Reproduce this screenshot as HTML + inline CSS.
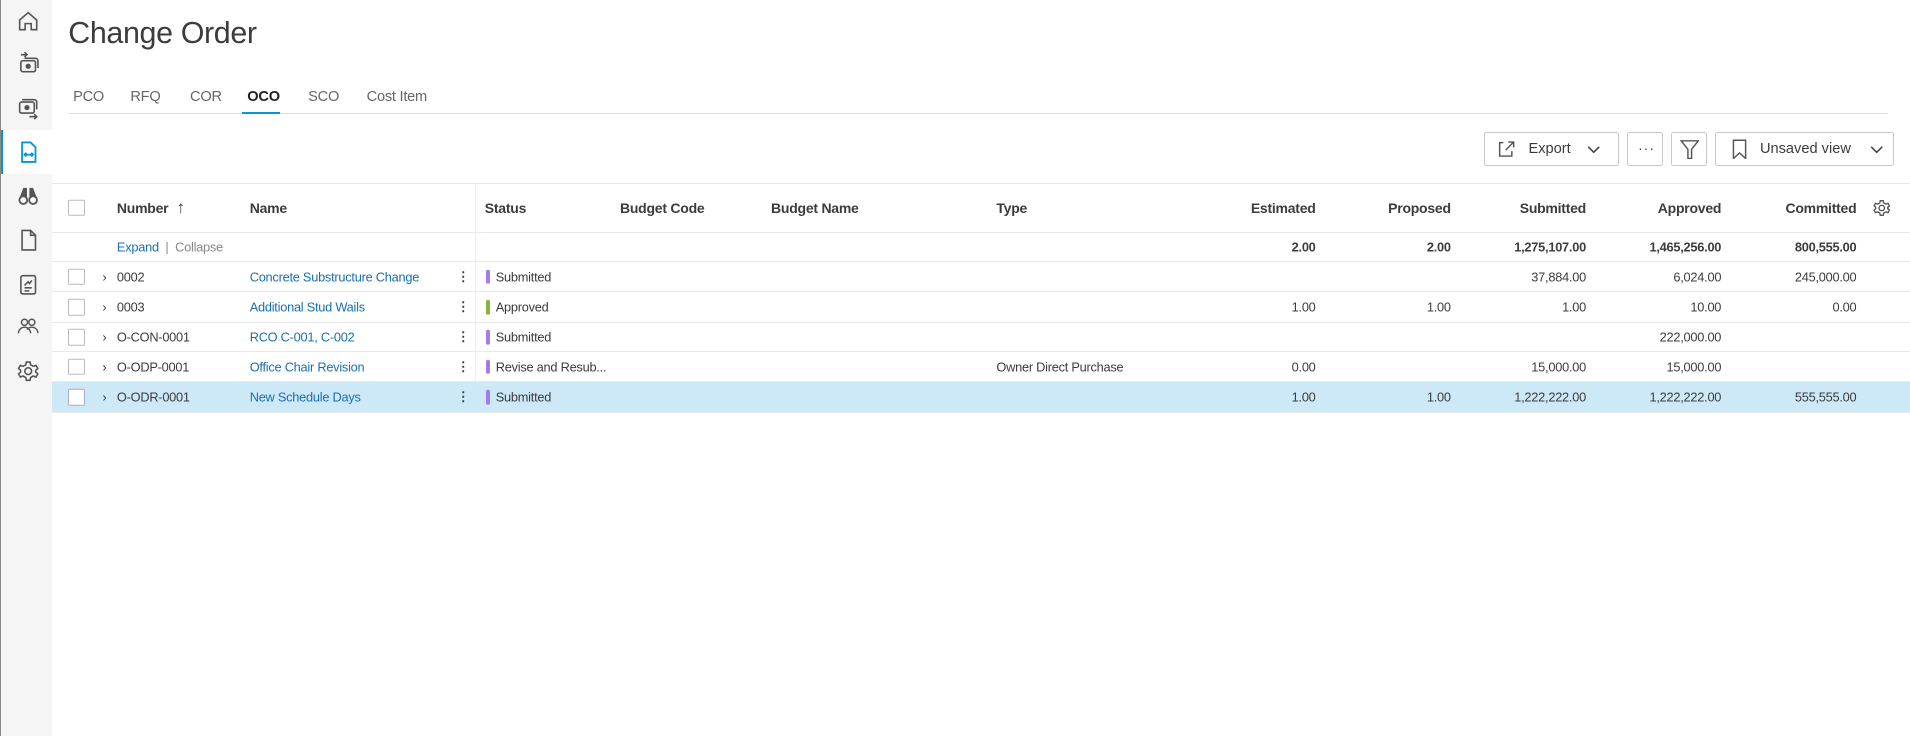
<!DOCTYPE html>
<html><head><meta charset="utf-8"><style>
html,body{margin:0;padding:0;background:#fff;overflow:hidden}
body{width:1568px;height:604px;zoom:1.21811;position:relative;font-family:"Liberation Sans",sans-serif;color:#3c3c3c}
.a{position:absolute;white-space:nowrap}
#side{left:0;top:0;width:43px;height:604px;background:#f5f5f5;border-left:1px solid #888;box-sizing:border-box}
.ic{position:absolute;left:12px;width:20px;height:20px}
.tab{position:absolute;top:73px;font-size:12px;color:#666;letter-spacing:-0.2px}
.btn{position:absolute;top:108px;height:28px;border:1px solid #c8c8c8;border-radius:2px;box-sizing:border-box;background:#fff}
.row{position:absolute;left:43px;width:1525px;border-bottom:1px solid #eaeaea;box-sizing:border-box;font-size:10.5px;color:#3c3c3c;letter-spacing:-0.2px}
.row .a{top:50%;transform:translateY(-50%)}
.cb{width:12px;height:12px;border:1px solid #bbb;background:#fff;border-radius:1px}
.lnk{color:#1a6fb0}
.r{text-align:right}
.hd{font-size:11.5px;font-weight:bold;color:#3c3c3c;letter-spacing:-0.2px}
.bar{width:3px;height:12px;border-radius:2px;background:#a67be8}
</style></head><body>
<div id="side" class="a">
<svg class="ic" style="top:7px" viewBox="0 0 20 20" fill="none" stroke="#555" stroke-width="1.3"><path d="M3 9 L10 3 L17 9 V17 H12.5 V12 H7.5 V17 H3 Z"/></svg>
<svg class="ic" style="top:42px" viewBox="0 0 20 20" fill="none" stroke="#555" stroke-width="1.3"><path d="M4 3 H9 M7 1 L9 3 L7 5"/><rect x="4" y="8" width="12" height="9" rx="1.5"/><path d="M7 6 H16 a2 2 0 0 1 2 2 V14"/><circle cx="10" cy="12.5" r="1.5" fill="#555"/></svg>
<svg class="ic" style="top:79px" viewBox="0 0 20 20" fill="none" stroke="#555" stroke-width="1.3"><rect x="3" y="5" width="12" height="9" rx="1.5"/><path d="M5 3 H15 a2 2 0 0 1 2 2 V11"/><circle cx="9" cy="9.5" r="1.5" fill="#555"/><path d="M11 17 H17 M15 15 L17 17 L15 19"/></svg>
<div class="a" style="left:0;top:107px;width:43px;height:36px;background:#fff;border-left:2px solid #0696d7;box-sizing:border-box"></div>
<svg class="ic" style="top:115px" viewBox="0 0 20 20" fill="none" stroke="#0696d7" stroke-width="1.5"><path d="M5 2 H12 L16 6 V18 H5 Z"/><path d="M7 12 H14 M8.5 10.5 L7 12 L8.5 13.5 M12.5 10.5 L14 12 L12.5 13.5"/></svg>
<svg class="ic" style="top:150px" viewBox="0 0 20 20" fill="#555"><path d="M3 12 L6 4 H9 V12 Z M11 12 V4 H14 L17 12 Z"/><circle cx="6" cy="14" r="3.2" fill="#fff" stroke="#555" stroke-width="1.5"/><circle cx="14" cy="14" r="3.2" fill="#fff" stroke="#555" stroke-width="1.5"/></svg>
<svg class="ic" style="top:187px" viewBox="0 0 20 20" fill="none" stroke="#555" stroke-width="1.3"><path d="M5 2 H12 L16 6 V18 H5 Z M12 2 V6 H16"/></svg>
<svg class="ic" style="top:223px" viewBox="0 0 20 20" fill="none" stroke="#555" stroke-width="1.3"><rect x="4" y="3" width="12" height="15" rx="1.5"/><path d="M7 11 L10 8 L11 9.5 L13 7 M7 13 H13 M7 15.5 H11"/></svg>
<svg class="ic" style="top:259px" viewBox="0 0 20 20" fill="none" stroke="#555" stroke-width="1.2"><circle cx="7" cy="6" r="2.5"/><circle cx="13" cy="6" r="2.5"/><path d="M2 15 a5 5 0 0 1 10 0 M9 12 a5 5 0 0 1 9 3"/></svg>
<svg class="ic" style="top:295px" viewBox="0 0 20 20" fill="none" stroke="#555" stroke-width="1.3"><circle cx="10" cy="10" r="2.8"/><path d="M8.5 2.5 H11.5 L12 4.8 L14.2 6 L16.4 5.2 L17.9 7.8 L16.2 9.3 V10.7 L17.9 12.2 L16.4 14.8 L14.2 14 L12 15.2 L11.5 17.5 H8.5 L8 15.2 L5.8 14 L3.6 14.8 L2.1 12.2 L3.8 10.7 V9.3 L2.1 7.8 L3.6 5.2 L5.8 6 L8 4.8 Z"/></svg>
</div>

<div class="a" style="left:56px;top:13px;font-size:25px;color:#3c3c3c;letter-spacing:-0.3px">Change Order</div>
<div class="tab" style="left:60px">PCO</div>
<div class="tab" style="left:107px">RFQ</div>
<div class="tab" style="left:156px">COR</div>
<div class="tab" style="left:203px;color:#222;font-weight:bold">OCO</div>
<div class="tab" style="left:253px">SCO</div>
<div class="tab" style="left:301px">Cost Item</div>
<div class="a" style="left:57px;top:93px;width:1493px;height:1px;background:#ddd"></div>
<div class="a" style="left:199px;top:92px;width:31px;height:2px;background:#0696d7"></div>

<div class="btn" style="left:1218px;width:111px">
<svg class="a" style="left:9px;top:5px" width="16" height="16" viewBox="0 0 16 16" fill="none" stroke="#555" stroke-width="1.2"><path d="M6 3 H3 V14 H13 V10 M8 9 L14 3 M10 2.5 H14.5 V7"/></svg>
<span class="a" style="left:36px;top:7px;font-size:12px">Export</span>
<svg class="a" style="left:84px;top:10px" width="11" height="8" viewBox="0 0 11 8" fill="none" stroke="#444" stroke-width="1.3"><path d="M1 1.5 L5.5 6 L10 1.5"/></svg></div>
<div class="btn" style="left:1336px;width:29px"><span class="a" style="left:8px;top:7px;font-size:11px;letter-spacing:1px">···</span></div>
<div class="btn" style="left:1372px;width:29px"><svg class="a" style="left:6px;top:5px" width="16" height="17" viewBox="0 0 16 17" fill="none" stroke="#555" stroke-width="1.2"><path d="M1 1.5 H15 L9.5 8.5 V16 H6.5 V8.5 Z"/></svg></div>
<div class="btn" style="left:1408px;width:147px">
<svg class="a" style="left:12px;top:5px" width="14" height="17" viewBox="0 0 14 17" fill="none" stroke="#555" stroke-width="1.2"><path d="M2 1 H12 V16 L7 11.5 L2 16 Z"/></svg>
<span class="a" style="left:36px;top:7px;font-size:12px">Unsaved view</span>
<svg class="a" style="left:126px;top:10px" width="11" height="8" viewBox="0 0 11 8" fill="none" stroke="#444" stroke-width="1.3"><path d="M1 1.5 L5.5 6 L10 1.5"/></svg></div>

<div class="a" style="left:43px;top:150px;width:1525px;height:1px;background:#e6e6e6"></div>
<div class="a" style="left:390px;top:150px;width:1px;height:188px;background:#f0f0f0;box-shadow:2px 0 4px rgba(0,0,0,.05)"></div>

<div class="row" style="top:151px;height:40px">
<div class="a cb" style="left:13px"></div>
<div class="a hd" style="left:53px">Number <span style="font-weight:normal;font-size:14px">&nbsp;↑</span></div>
<div class="a hd" style="left:162px">Name</div>
<div class="a hd" style="left:355px">Status</div>
<div class="a hd" style="left:466px">Budget Code</div>
<div class="a hd" style="left:590px">Budget Name</div>
<div class="a hd" style="left:775px">Type</div>
<div class="a hd r" style="right:488px">Estimated</div>
<div class="a hd r" style="right:377px">Proposed</div>
<div class="a hd r" style="right:266px">Submitted</div>
<div class="a hd r" style="right:155px">Approved</div>
<div class="a hd r" style="right:44px">Committed</div>
<svg class="a" style="left:1494px" width="16" height="16" viewBox="0 0 20 20" fill="none" stroke="#555" stroke-width="1.4"><circle cx="10" cy="10" r="2.8"/><path d="M8.5 2.5 H11.5 L12 4.8 L14.2 6 L16.4 5.2 L17.9 7.8 L16.2 9.3 V10.7 L17.9 12.2 L16.4 14.8 L14.2 14 L12 15.2 L11.5 17.5 H8.5 L8 15.2 L5.8 14 L3.6 14.8 L2.1 12.2 L3.8 10.7 V9.3 L2.1 7.8 L3.6 5.2 L5.8 6 L8 4.8 Z"/></svg>
</div>
<div class="row" style="top:191px;height:24px;font-weight:bold">
<div class="a" style="left:53px;font-weight:normal"><span class="lnk">Expand</span> <span style="color:#888">&nbsp;|&nbsp; Collapse</span></div>
<div class="a r" style="right:488px">2.00</div>
<div class="a r" style="right:377px">2.00</div>
<div class="a r" style="right:266px">1,275,107.00</div>
<div class="a r" style="right:155px">1,465,256.00</div>
<div class="a r" style="right:44px">800,555.00</div>
</div>

<div class="row" style="top:215px;height:25px">
<div class="a cb" style="left:13px"></div><div class="a" style="left:41px">›</div><div class="a" style="left:53px">0002</div>
<div class="a lnk" style="left:162px">Concrete Substructure Change</div><div class="a" style="left:332px;font-weight:bold">⋮</div>
<div class="a bar" style="left:356px"></div><div class="a" style="left:364px">Submitted</div>
<div class="a r" style="right:266px">37,884.00</div><div class="a r" style="right:155px">6,024.00</div><div class="a r" style="right:44px">245,000.00</div>
</div>
<div class="row" style="top:240px;height:25px">
<div class="a cb" style="left:13px"></div><div class="a" style="left:41px">›</div><div class="a" style="left:53px">0003</div>
<div class="a lnk" style="left:162px">Additional Stud Wails</div><div class="a" style="left:332px;font-weight:bold">⋮</div>
<div class="a bar" style="left:356px;background:#87b340"></div><div class="a" style="left:364px">Approved</div>
<div class="a r" style="right:488px">1.00</div><div class="a r" style="right:377px">1.00</div><div class="a r" style="right:266px">1.00</div><div class="a r" style="right:155px">10.00</div><div class="a r" style="right:44px">0.00</div>
</div>
<div class="row" style="top:265px;height:24px">
<div class="a cb" style="left:13px"></div><div class="a" style="left:41px">›</div><div class="a" style="left:53px">O-CON-0001</div>
<div class="a lnk" style="left:162px">RCO C-001, C-002</div><div class="a" style="left:332px;font-weight:bold">⋮</div>
<div class="a bar" style="left:356px"></div><div class="a" style="left:364px">Submitted</div>
<div class="a r" style="right:155px">222,000.00</div>
</div>
<div class="row" style="top:289px;height:25px">
<div class="a cb" style="left:13px"></div><div class="a" style="left:41px">›</div><div class="a" style="left:53px">O-ODP-0001</div>
<div class="a lnk" style="left:162px">Office Chair Revision</div><div class="a" style="left:332px;font-weight:bold">⋮</div>
<div class="a bar" style="left:356px"></div><div class="a" style="left:364px">Revise and Resub...</div>
<div class="a" style="left:775px">Owner Direct Purchase</div>
<div class="a r" style="right:488px">0.00</div><div class="a r" style="right:266px">15,000.00</div><div class="a r" style="right:155px">15,000.00</div>
</div>
<div class="row" style="top:314px;height:25px;background:#cde8f6">
<div class="a cb" style="left:13px;border-color:#aac"></div><div class="a" style="left:41px">›</div><div class="a" style="left:53px">O-ODR-0001</div>
<div class="a lnk" style="left:162px">New Schedule Days</div><div class="a" style="left:332px;font-weight:bold">⋮</div>
<div class="a bar" style="left:356px"></div><div class="a" style="left:364px">Submitted</div>
<div class="a r" style="right:488px">1.00</div><div class="a r" style="right:377px">1.00</div><div class="a r" style="right:266px">1,222,222.00</div><div class="a r" style="right:155px">1,222,222.00</div><div class="a r" style="right:44px">555,555.00</div>
</div>
</body></html>
